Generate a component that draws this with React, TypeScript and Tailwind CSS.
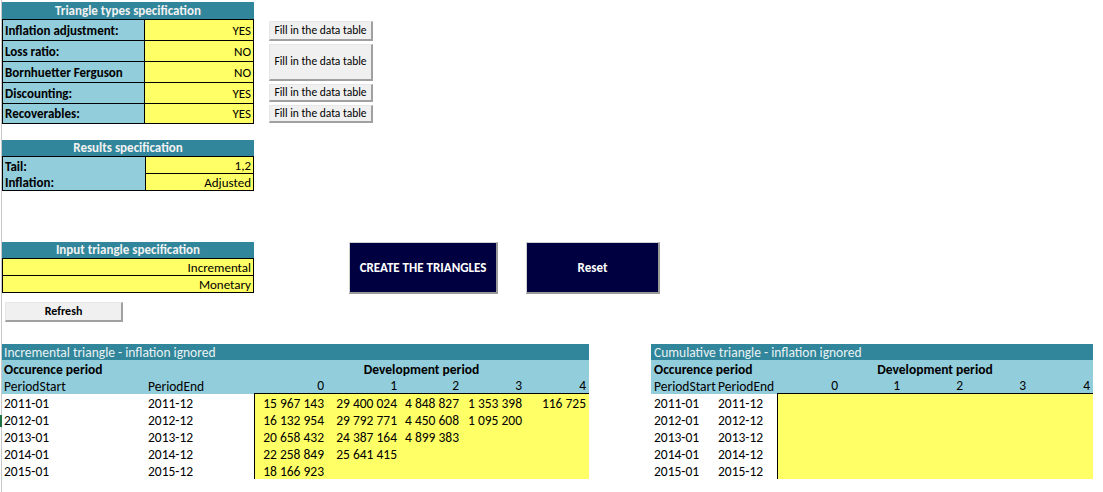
import React from 'react';

const teal = 'bg-[#31869b]';
const blue = 'bg-[#92cddc]';
const yellow = 'bg-[#ffff66]';

const typeRows = [
  { label: 'Inflation adjustment:', value: 'YES', h: 'h-[21px]' },
  { label: 'Loss ratio:', value: 'NO', h: 'h-[21px]' },
  { label: 'Bornhuetter Ferguson', value: 'NO', h: 'h-[21px]' },
  { label: 'Discounting:', value: 'YES', h: 'h-[21px]' },
  { label: 'Recoverables:', value: 'YES', h: 'h-[20px]' },
];

const fillButtons = [
  'h-[20px] mt-[19px]',
  'h-[37px] mt-[3px]',
  'h-[18px] mt-[3px]',
  'h-[18px] mt-[3px]',
];

const periods = [
  ['2011-01', '2011-12'],
  ['2012-01', '2012-12'],
  ['2013-01', '2013-12'],
  ['2014-01', '2014-12'],
  ['2015-01', '2015-12'],
];

const incremental = [
  ['15 967 143', '29 400 024', '4 848 827', '1 353 398', '116 725'],
  ['16 132 954', '29 792 771', '4 450 608', '1 095 200', ''],
  ['20 658 432', '24 387 164', '4 899 383', '', ''],
  ['22 258 849', '25 641 415', '', '', ''],
  ['18 166 923', '', '', '', ''],
];

function GreyButton({ className, children }: { className: string; children: React.ReactNode }) {
  return (
    <div
      className={`flex items-center justify-center bg-[#f0f0f0] border-t border-l border-t-[#e6e6e6] border-l-[#e6e6e6] border-r-2 border-b-2 border-r-[#a0a0a0] border-b-[#a0a0a0] text-black ${className}`}
    >
      {children}
    </div>
  );
}

function NavyButton({ className, children }: { className: string; children: React.ReactNode }) {
  return (
    <div
      className={`flex items-center justify-center h-[52px] bg-[#000040] border-t border-l border-t-[#d0d0d0] border-l-[#d0d0d0] border-r-2 border-b-2 border-r-[#9a9a9a] border-b-[#9a9a9a] text-white font-bold text-[13px] ${className}`}
    >
      {children}
    </div>
  );
}

// one spreadsheet cell, text sits at the bottom like Excel does
const cell = 'h-[17px] flex items-end leading-[15px] whitespace-nowrap overflow-hidden';

function Triangle({
  title,
  cols,
  widths,
  data,
  clipStart,
}: {
  title: string;
  cols: string;
  widths: string;
  data: string[][] | null;
  clipStart?: boolean;
}) {
  const lead = clipStart ? 'pl-[3px]' : 'pl-[2px]';
  return (
    <div className={`grid ${cols} ${widths} text-[13.5px]`}>
      <div className={`col-span-7 h-[16px] ${teal} text-[#e9f2f4] ${lead} flex items-end leading-[15px]`}>{title}</div>
      <div className={`col-span-2 ${cell} ${blue} font-bold ${lead}`}>Occurence period</div>
      <div className={`col-span-5 ${cell} ${blue} font-bold justify-center`}>Development period</div>
      <div className={`${cell} ${blue} ${lead}`}>PeriodStart</div>
      <div className={`${cell} ${blue} pl-[2px]`}>PeriodEnd</div>
      {[0, 1, 2, 3, 4].map((n) => (
        <div key={n} className={`${cell} ${blue} justify-end pr-[3px] border-b border-black`}>
          {n}
        </div>
      ))}
      {periods.map((p, r) => (
        <React.Fragment key={r}>
          <div className={`${cell} ${lead}`}>{p[0]}</div>
          <div className={`${cell} pl-[2px]`}>{p[1]}</div>
          {[0, 1, 2, 3, 4].map((c) => (
            <div
              key={c}
              className={`${cell} ${yellow} justify-end pr-[3px] ${c === 0 ? 'border-l border-black' : ''}`}
            >
              {data ? data[r][c] : ''}
            </div>
          ))}
        </React.Fragment>
      ))}
    </div>
  );
}

export default function App() {
  return (
    <div
      className="relative w-[1103px] h-[492px] bg-white overflow-hidden text-[13px] text-black"
      style={{ fontFamily: 'Carlito, Lato, "Open Sans", sans-serif' }}
    >
      <div className="absolute left-0 top-[415px] w-[2px] h-[12px] bg-[#217346]" />
      <div className="ml-px h-full border-l border-[#c8c8c8] flex flex-col">
        {/* triangle types + fill buttons */}
        <div className="flex pt-[2px]">
          <div className="w-[252px]">
            <div className={`h-[17px] ${teal} text-[#f2f2f2] font-bold flex items-end justify-center leading-[16px]`}>
              Triangle types specification
            </div>
            {typeRows.map((r) => (
              <div key={r.label} className={`flex ${r.h} border-t border-black leading-[16px]`}>
                <div className={`w-[143px] ${blue} font-bold pl-[2px] border-r border-black flex items-end pb-[1px] border-l`}>
                  {r.label}
                </div>
                <div className={`flex-1 ${yellow} flex items-end justify-end pr-[2px] pb-[1px] border-r border-black`}>
                  {r.value}
                </div>
              </div>
            ))}
            <div className="border-t border-black" />
          </div>
          <div className="ml-[15px] w-[104px] flex flex-col text-[11.5px]">
            {fillButtons.map((c, i) => (
              <GreyButton key={i} className={c}>
                Fill in the data table
              </GreyButton>
            ))}
          </div>
        </div>

        {/* results specification */}
        <div className="w-[252px] mt-[16px]">
          <div className={`h-[17px] ${teal} text-[#f2f2f2] font-bold flex items-end justify-center leading-[16px] border-b border-black`}>
            Results specification
          </div>
          <div className="flex h-[17px] leading-[15px]">
            <div className={`w-[143px] ${blue} font-bold pl-[2px] border-l border-black flex items-end`}>Tail:</div>
            <div className={`flex-1 ${yellow} flex items-end justify-end pr-[2px] border-l border-r border-b border-black`}>1,2</div>
          </div>
          <div className="flex h-[17px] border-b border-black leading-[15px]">
            <div className={`w-[143px] ${blue} font-bold pl-[2px] border-l border-black flex items-end`}>Inflation:</div>
            <div className={`flex-1 ${yellow} flex items-end justify-end pr-[2px] border-l border-r border-black`}>Adjusted</div>
          </div>
        </div>

        {/* input spec + action buttons */}
        <div className="flex mt-[51px]">
          <div className="w-[252px] flex flex-col leading-[15px]">
            <div className={`h-[17px] ${teal} text-[#f2f2f2] font-bold flex items-end justify-center leading-[16px] border-b border-black`}>
              Input triangle specification
            </div>
            <div className={`h-[17px] ${yellow} flex items-end justify-end pr-[2px] border-l border-r border-b border-black`}>Incremental</div>
            <div className={`h-[17px] ${yellow} flex items-end justify-end pr-[2px] border-l border-r border-b border-black`}>Monetary</div>
            <GreyButton className="ml-[3px] mt-[9px] w-[118px] h-[20px] font-bold text-[12px]">Refresh</GreyButton>
          </div>
          <NavyButton className="ml-[95px] w-[149px]">CREATE THE TRIANGLES</NavyButton>
          <NavyButton className="ml-[28px] w-[134px]">Reset</NavyButton>
        </div>

        {/* triangles */}
        <div className="flex mt-[22px]">
          <Triangle
            title="Incremental triangle - inflation ignored"
            cols="grid-cols-[144px_108px_73px_73px_62px_63px_64px]"
            widths="w-[587px]"
            data={incremental}
          />
          <div className="ml-[62px]">
            <Triangle
              title="Cumulative triangle - inflation ignored"
              cols="grid-cols-[65px_61px_64px_62px_63px_63px_64px]"
              widths="w-[442px]"
              data={null}
              clipStart
            />
          </div>
        </div>
      </div>
    </div>
  );
}
